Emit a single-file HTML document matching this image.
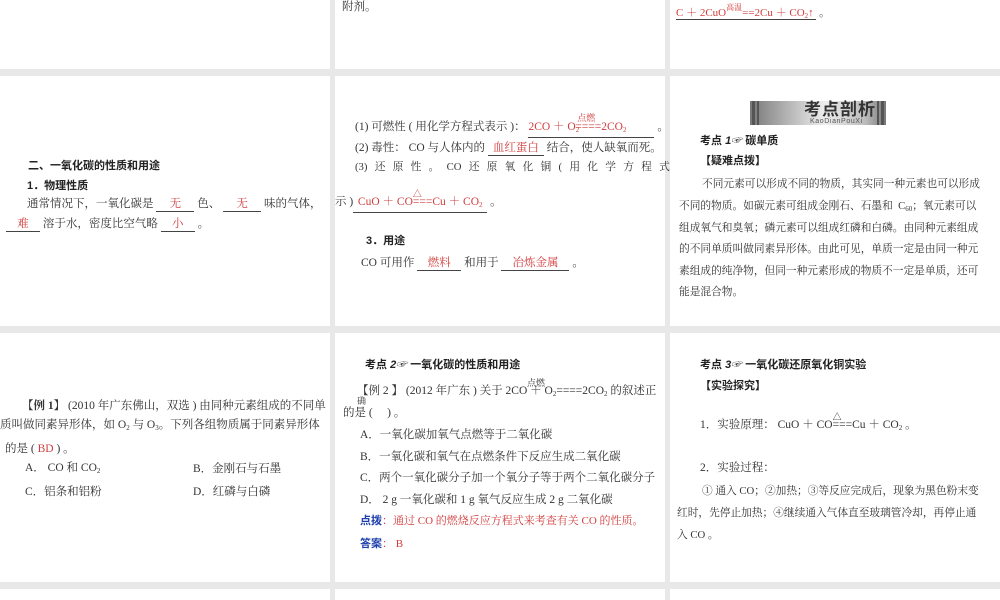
<!DOCTYPE html>
<html><head><meta charset="utf-8"><style>
*{margin:0;padding:0;box-sizing:border-box}
body{width:1000px;height:600px;background:#e8e8e8;position:relative;overflow:hidden;font-family:"Liberation Serif","Noto Serif CJK SC",serif;color:#333;font-size:11.5px}
.p{position:absolute;background:#fff;overflow:hidden}
.t{position:absolute;white-space:nowrap;line-height:14px}
.s{font-size:10.7px}
.b{font-family:"Liberation Sans","Noto Sans CJK SC",sans-serif;font-weight:bold;color:#222}
.r{color:#d23c3c}
.u{border-bottom:1px solid #444;display:inline-block;text-align:center;line-height:13px}
.bl{color:#1f3fae;font-weight:bold;font-family:"Liberation Sans","Noto Sans CJK SC",sans-serif}
sub{font-size:7px;vertical-align:-2px}
</style></head><body>
<div class="p" style="left:0;top:0;width:330px;height:69px"></div>
<div class="p" style="left:335px;top:0;width:330px;height:69px"></div>
<div class="p" style="left:670px;top:0;width:330px;height:69px"></div>
<div class="p" style="left:0;top:76px;width:330px;height:250px"></div>
<div class="p" style="left:335px;top:76px;width:330px;height:250px"></div>
<div class="p" style="left:670px;top:76px;width:330px;height:250px"></div>
<div class="p" style="left:0;top:333px;width:330px;height:249px"></div>
<div class="p" style="left:335px;top:333px;width:330px;height:249px"></div>
<div class="p" style="left:670px;top:333px;width:330px;height:249px"></div>
<div class="p" style="left:0;top:589px;width:330px;height:11px"></div>
<div class="p" style="left:335px;top:589px;width:330px;height:11px"></div>
<div class="p" style="left:670px;top:589px;width:330px;height:11px"></div>

<!-- top row -->
<div class="t" style="left:342px;top:0px">附剂。</div>
<div class="t r" style="left:676px;top:1px;font-size:11px"><span style="border-bottom:1px solid #444">C ＋ 2CuO<span style="font-size:8px;vertical-align:6px">高温</span>==2Cu ＋ CO<sub>2</sub>↑&nbsp;</span><span style="color:#333"> 。</span></div>

<!-- row 2 col 1 -->
<div class="t b" style="left:28px;top:159px;font-size:11px">二、一氧化碳的性质和用途</div>
<div class="t b" style="left:27px;top:179px;font-size:11px">1．物理性质</div>
<div class="t" style="left:27px;top:197px">通常情况下，一氧化碳是 <span class="u r" style="width:38px">无</span> 色、 <span class="u r" style="width:38px">无</span> 味的气体，</div>
<div class="t" style="left:6px;top:217px"><span class="u r" style="width:34px">难</span> 溶于水，密度比空气略 <span class="u r" style="width:34px">小</span> 。</div>

<!-- row 2 col 2 -->
<div class="t" style="left:355px;top:120px">(1) 可燃性 ( 用化学方程式表示 )： <span class="u r" style="width:126px;text-align:left">2CO ＋ O<sub>2</sub><span style="font-size:9px;position:relative;top:-9px;margin-left:-2px">点燃</span><span style="margin-left:-20px">====</span>2CO<sub>2</sub></span> 。</div>
<div class="t" style="left:355px;top:141px">(2) 毒性： CO 与人体内的 <span class="u r" style="width:56px">血红蛋白</span> 结合，使人缺氧而死。</div>
<div class="t s" style="left:355px;top:160px;word-spacing:4.6px">(3) 还 原 性 。 CO 还 原 氧 化 铜 ( 用 化 学 方 程 式</div>
<div class="t" style="left:335px;top:195px">示 )<span class="u r" style="width:134px">CuO ＋ CO<span style="font-size:9px;position:relative;top:-8px">△</span><span style="margin-left:-9px">===</span>Cu ＋ CO<sub>2</sub></span> 。</div>
<div class="t b" style="left:366px;top:234px;font-size:11px">3．用途</div>
<div class="t" style="left:361px;top:256px">CO 可用作 <span class="u r" style="width:44px">燃料</span> 和用于 <span class="u r" style="width:68px">冶炼金属</span> 。</div>

<!-- row 2 col 3 -->
<div style="position:absolute;left:750px;top:101px;width:136px;height:24px;background:linear-gradient(90deg,#777 0,#999 15%,#eee 55%,#bbb 85%,#777 100%)"></div>
<div style="position:absolute;left:752px;top:101px;width:3px;height:24px;background:#555"></div>
<div style="position:absolute;left:757px;top:101px;width:2px;height:24px;background:#555"></div>
<div style="position:absolute;left:877px;top:101px;width:2px;height:24px;background:#555"></div>
<div style="position:absolute;left:881px;top:101px;width:3px;height:24px;background:#555"></div>
<div class="t b" style="left:804px;top:100px;font-size:17px;letter-spacing:1px;color:#333;line-height:19px">考点剖析</div>
<div class="t" style="left:810px;top:118px;font-size:7px;line-height:8px;color:#555;font-family:'Liberation Sans',sans-serif;letter-spacing:0.6px">KaoDianPouXi</div>
<div class="t b" style="left:700px;top:134px;font-size:11px">考点 <span style="font-style:italic">1☞</span> 碳单质</div>
<div class="t b" style="left:700px;top:154px;font-size:11px">【疑难点拨】</div>
<div class="t s" style="left:702px;top:177px">不同元素可以形成不同的物质，其实同一种元素也可以形成</div>
<div class="t s" style="left:679px;top:199px">不同的物质。如碳元素可组成金刚石、石墨和&nbsp; C<sub>60</sub>；氧元素可以</div>
<div class="t s" style="left:679px;top:221px">组成氧气和臭氧；磷元素可以组成红磷和白磷。由同种元素组成</div>
<div class="t s" style="left:679px;top:242px">的不同单质叫做同素异形体。由此可见，单质一定是由同一种元</div>
<div class="t s" style="left:679px;top:264px">素组成的纯净物，但同一种元素形成的物质不一定是单质，还可</div>
<div class="t s" style="left:679px;top:285px">能是混合物。</div>

<!-- row 3 col 1 -->
<div class="t" style="left:22px;top:399px">【<b>例 1</b>】 (2010 年广东佛山，双选 ) 由同种元素组成的不同单</div>
<div class="t" style="left:0px;top:418px">质叫做同素异形体，如 O<sub>2</sub> 与 O<sub>3</sub>。下列各组物质属于同素异形体</div>
<div class="t" style="left:5px;top:442px">的是 ( <span class="r">BD</span> ) 。</div>
<div class="t" style="left:25px;top:461px">A． CO 和 CO<sub>2</sub></div>
<div class="t" style="left:193px;top:462px">B．金刚石与石墨</div>
<div class="t" style="left:25px;top:485px">C．铝条和铝粉</div>
<div class="t" style="left:193px;top:485px">D．红磷与白磷</div>

<!-- row 3 col 2 -->
<div class="t b" style="left:365px;top:358px;font-size:11px">考点 <span style="font-style:italic">2☞</span> 一氧化碳的性质和用途</div>
<div class="t" style="left:357px;top:384px">【例 2 】 (2012 年广东 ) 关于 2CO ＋ O<sub>2</sub>====2CO<sub>2</sub> 的叙述正</div>
<div class="t" style="left:527px;top:376px;font-size:9px">点燃</div>
<div class="t" style="left:357px;top:396px;font-size:9px;line-height:10px">确</div>
<div class="t" style="left:343px;top:406px">的是 (&nbsp;&nbsp;&nbsp;&nbsp; ) 。</div>
<div class="t" style="left:360px;top:428px">A．一氧化碳加氧气点燃等于二氧化碳</div>
<div class="t" style="left:360px;top:450px">B．一氧化碳和氧气在点燃条件下反应生成二氧化碳</div>
<div class="t" style="left:360px;top:471px">C．两个一氧化碳分子加一个氧分子等于两个二氧化碳分子</div>
<div class="t" style="left:360px;top:493px">D． 2 g 一氧化碳和 1 g 氧气反应生成 2 g 二氧化碳</div>
<div class="t" style="left:360px;top:514px;font-size:11px"><span class="bl">点拨</span><span class="r">：通过 CO 的燃烧反应方程式来考查有关 CO 的性质。</span></div>
<div class="t" style="left:360px;top:537px;font-size:11px"><span class="bl">答案</span><span class="r">： B</span></div>

<!-- row 3 col 3 -->
<div class="t b" style="left:700px;top:358px;font-size:11px">考点 <span style="font-style:italic">3☞</span> 一氧化碳还原氧化铜实验</div>
<div class="t b" style="left:700px;top:379px;font-size:11px">【实验探究】</div>
<div class="t" style="left:700px;top:418px">1．实验原理： CuO ＋ CO<span style="font-size:9px;position:relative;top:-8px">△</span><span style="margin-left:-9px">===</span>Cu ＋ CO<sub>2</sub> 。</div>
<div class="t" style="left:700px;top:461px">2．实验过程：</div>
<div class="t s" style="left:702px;top:484px">① 通入 CO；②加热；③等反应完成后，现象为黑色粉末变</div>
<div class="t s" style="left:677px;top:506px">红时，先停止加热；④继续通入气体直至玻璃管冷却，再停止通</div>
<div class="t s" style="left:677px;top:528px">入 CO 。</div>
</body></html>
